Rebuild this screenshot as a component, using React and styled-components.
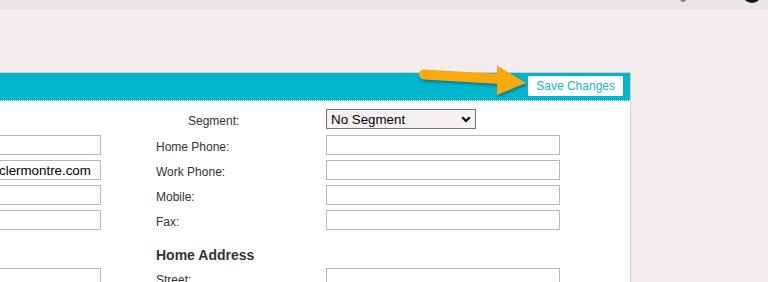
import React from 'react';
import styled, { createGlobalStyle } from 'styled-components';

const GlobalStyle = createGlobalStyle`
  html, body {
    margin: 0;
    padding: 0;
    background-color: #f3eded;
    overflow: hidden;
    font-family: "Liberation Sans", Arial, sans-serif;
  }
`;

const TopBar = styled.div`
  height: 10px;
  background-color: #ebe5e5;
  display: flex;
  justify-content: flex-end;
  align-items: flex-start;
  gap: 56px;
  padding-right: 6px;
  overflow: hidden;
`;

const TopIcon = styled.span`
  display: block;
  width: ${(p) => p.$size}px;
  height: ${(p) => p.$size}px;
  border-radius: 50%;
  background-color: ${(p) => p.$color};
  margin-top: ${(p) => p.$offset}px;
`;

const Panel = styled.div`
  position: relative;
  box-sizing: border-box;
  width: 831px;
  margin: 62px 0 0 -200px;
  background-color: #fff;
  border: 1px solid #d2cccc;
  border-bottom: none;
`;

const Header = styled.div`
  box-sizing: content-box;
  height: 24px;
  padding: 3px 7px 0 0;
  background-color: #02b4cc;
  border-bottom: 1px dotted #ffffff;
  display: flex;
  justify-content: flex-end;
  align-items: flex-start;
`;

const SaveButton = styled.button`
  height: 20px;
  padding: 0 8px;
  border: none;
  background-color: #fff;
  color: #1ab2cc;
  font-family: "Liberation Sans", Arial, sans-serif;
  font-size: 12px;
  cursor: pointer;
`;

const Arrow = styled.svg`
  position: absolute;
  top: -9px;
  right: 102px;
  filter: drop-shadow(1px 2px 1px rgba(0, 0, 0, 0.3));
`;

const Body = styled.div`
  display: grid;
  grid-template-columns: 160px 140px 55px 170px 234px;
  grid-auto-rows: auto;
  row-gap: 5px;
  padding-top: 8px;
  padding-bottom: 20px;
`;

const Label = styled.label`
  align-self: center;
  padding-top: 3px;
  padding-left: ${(p) => p.$indent || 0}px;
  font-size: 12px;
  color: #333;
  grid-column: ${(p) => p.$col};
`;

const Heading = styled.div`
  grid-column: ${(p) => p.$col} / span 2;
  padding-top: 12px;
  font-size: 14px;
  font-weight: bold;
  color: #333;
  line-height: 16px;
`;

const TextInput = styled.input`
  box-sizing: border-box;
  width: 100%;
  height: 20px;
  margin: 0;
  padding: 1px 2px;
  border: 1px solid #b8b8b8;
  background: #fff;
  font-family: "Liberation Sans", Arial, sans-serif;
  font-size: 13.333px;
  color: #000;
  outline: none;
  grid-column: ${(p) => p.$col};
`;

const SelectWrap = styled.div`
  position: relative;
  width: 150px;
  height: 21px;
  grid-column: ${(p) => p.$col};
`;

const Select = styled.select`
  appearance: none;
  box-sizing: border-box;
  width: 150px;
  height: 20px;
  margin: 0;
  padding: 0 4px;
  border: 1px solid #767676;
  border-radius: 0;
  background-color: #f6f2f2;
  font-family: "Liberation Sans", Arial, sans-serif;
  font-size: 13.333px;
  color: #000;
`;

const Chevron = styled.svg`
  position: absolute;
  right: 5px;
  top: 7px;
  pointer-events: none;
`;

const Spacer = styled.div`
  grid-column: ${(p) => p.$col};
`;

const rightFields = ['Home Phone:', 'Work Phone:', 'Mobile:', 'Fax:'];
const leftValues = ['', 'info@clermontre.com', '', ''];

export default function App() {
  return (
    <>
      <GlobalStyle />
      <TopBar>
        <TopIcon $size={6} $color="#8a8585" $offset={-4} />
        <TopIcon $size={20} $color="#111" $offset={-17} />
      </TopBar>
      <Panel>
        <Header>
          <SaveButton>Save Changes</SaveButton>
        </Header>
        <Arrow width="112" height="34" viewBox="0 0 112 34">
          <line x1="8" y1="10.5" x2="84" y2="15" stroke="#f7a90d" strokeWidth="10" strokeLinecap="round" />
          <polygon points="81,1.5 110,19 81,31" fill="#f7a90d" />
        </Arrow>
        <Body>
          <Spacer $col="1 / span 3" />
          <Label $col={4} $indent={32}>Segment:</Label>
          <SelectWrap $col={5}>
            <Select defaultValue="none">
              <option value="none">No Segment</option>
            </Select>
            <Chevron width="10" height="7" viewBox="0 0 10 7">
              <path d="M1.2 1.2 L5 5 L8.8 1.2" fill="none" stroke="#000" strokeWidth="2.2" />
            </Chevron>
          </SelectWrap>

          {rightFields.map((label, i) => (
            <React.Fragment key={label}>
              <Spacer $col={1} />
              <TextInput $col={2} defaultValue={leftValues[i]} />
              <Label $col={4}>{label}</Label>
              <TextInput $col={5} />
            </React.Fragment>
          ))}

          <Heading $col={4}>Home Address</Heading>

          <Spacer $col={1} />
          <TextInput $col={2} />
          <Label $col={4}>Street:</Label>
          <TextInput $col={5} />
        </Body>
      </Panel>
    </>
  );
}
